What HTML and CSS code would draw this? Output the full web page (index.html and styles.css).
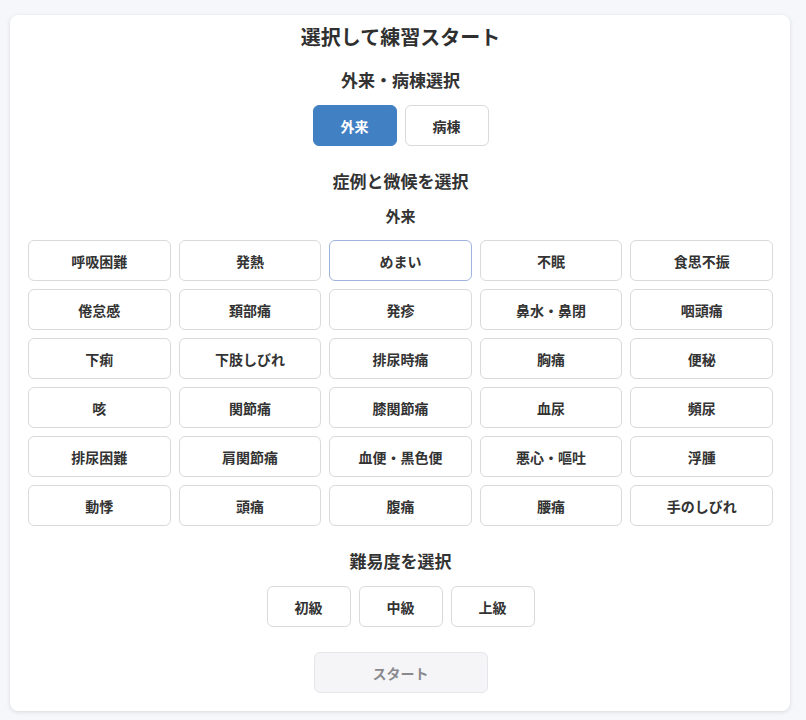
FILE: index.html
```html
<!DOCTYPE html>
<html lang="ja">
<head>
<meta charset="utf-8">
<title>選択して練習スタート</title>
<link rel="stylesheet" href="styles.css">
</head>
<body>
<main class="card">
  <h1 class="title">選択して練習スタート</h1>

  <h2 class="heading">外来・病棟選択</h2>
  <div class="choice-row">
    <button class="btn btn-small active">外来</button>
    <button class="btn btn-small">病棟</button>
  </div>

  <h2 class="heading heading-gap">症例と微候を選択</h2>
  <h3 class="subheading">外来</h3>
  <div class="grid">
    <button class="btn">呼吸困難</button>
    <button class="btn">発熱</button>
    <button class="btn focus">めまい</button>
    <button class="btn">不眠</button>
    <button class="btn">食思不振</button>
    <button class="btn">倦怠感</button>
    <button class="btn">頚部痛</button>
    <button class="btn">発疹</button>
    <button class="btn">鼻水・鼻閉</button>
    <button class="btn">咽頭痛</button>
    <button class="btn">下痢</button>
    <button class="btn">下肢しびれ</button>
    <button class="btn">排尿時痛</button>
    <button class="btn">胸痛</button>
    <button class="btn">便秘</button>
    <button class="btn">咳</button>
    <button class="btn">関節痛</button>
    <button class="btn">膝関節痛</button>
    <button class="btn">血尿</button>
    <button class="btn">頻尿</button>
    <button class="btn">排尿困難</button>
    <button class="btn">肩関節痛</button>
    <button class="btn">血便・黒色便</button>
    <button class="btn">悪心・嘔吐</button>
    <button class="btn">浮腫</button>
    <button class="btn">動悸</button>
    <button class="btn">頭痛</button>
    <button class="btn">腹痛</button>
    <button class="btn">腰痛</button>
    <button class="btn">手のしびれ</button>
  </div>

  <h2 class="heading heading-gap">難易度を選択</h2>
  <div class="choice-row">
    <button class="btn btn-small">初級</button>
    <button class="btn btn-small">中級</button>
    <button class="btn btn-small">上級</button>
  </div>

  <div class="start-row">
    <button class="btn start" disabled>スタート</button>
  </div>
</main>
</body>
</html>
```

FILE: styles.css
```css
* {
  box-sizing: border-box;
}

html, body {
  margin: 0;
  padding: 0;
}

body {
  background: #f5f7fb;
  font-family: "Noto Sans CJK JP", "Noto Sans", sans-serif;
  color: #333;
  padding: 15px 16px 9px 10px;
}

.card {
  background: #ffffff;
  border-radius: 8px;
  box-shadow: 0 1px 4px rgba(0, 0, 0, 0.12);
  padding: 10px 17px 18px 18px;
  display: flex;
  flex-direction: column;
  align-items: center;
}

.title {
  margin: 0;
  font-size: 20px;
  line-height: 24px;
  font-weight: 700;
  color: #2f2f2f;
}

.heading {
  margin: 19px 0 0;
  font-size: 17px;
  line-height: 24px;
  font-weight: 700;
  color: #333;
}

.heading-gap {
  margin-top: 23px;
}

.subheading {
  margin: 12px 0 0;
  font-size: 15px;
  line-height: 22px;
  font-weight: 700;
  color: #333;
}

.choice-row {
  display: flex;
  gap: 8px;
  margin-top: 13px;
}

.btn {
  font-family: inherit;
  font-size: 14px;
  font-weight: 700;
  color: #333;
  background: #ffffff;
  border: 1px solid #d9d9de;
  border-radius: 6px;
  height: 41px;
  padding: 0;
  cursor: pointer;
  outline: none;
}

.btn-small {
  width: 84px;
}

.btn.active {
  background: #4280c4;
  border-color: #4280c4;
  color: #ffffff;
}

.grid {
  width: 100%;
  margin-top: 13px;
  display: grid;
  grid-template-columns: repeat(5, 1fr);
  gap: 8px;
}

.grid .btn {
  height: 41px;
}

.grid .btn.focus,
.grid .btn.focus:hover {
  border-color: #9fb4dc;
}

.start-row {
  margin-top: 25px;
}

.start {
  width: 174px;
  background: #f5f5f7;
  border-color: #e6e6ea;
  color: #8a8a8e;
  cursor: default;
}
```
